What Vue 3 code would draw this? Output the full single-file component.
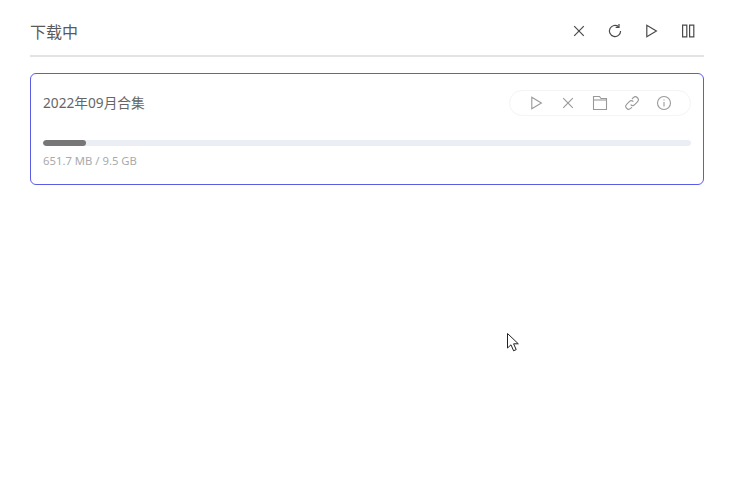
<template>
  <div class="page">
    <header class="head">
      <h1 class="title">下载中</h1>
      <div class="head-actions">
        <button v-for="icon in headIcons" :key="icon" class="head-btn">
          <svg width="16" height="16" viewBox="0 0 16 16" fill="none" stroke="currentColor" stroke-width="1.2">
            <path v-for="d in paths[icon]" :key="d" :d="d" />
          </svg>
        </button>
      </div>
    </header>

    <section class="task">
      <div class="task-top">
        <span class="task-name">2022年09月合集</span>
        <div class="pill">
          <button v-for="icon in taskIcons" :key="icon" class="pill-btn">
            <svg width="16" height="16" viewBox="0 0 16 16" fill="none" stroke="currentColor" stroke-width="1.1">
              <path v-for="d in paths[icon]" :key="d" :d="d" />
            </svg>
          </button>
        </div>
      </div>
      <div class="track">
        <div class="bar" :style="{ width: percent + '%' }"></div>
      </div>
      <div class="size">651.7 MB / 9.5 GB</div>
    </section>

    <svg class="cursor" width="14" height="21" viewBox="0 0 14 21">
      <path d="M1.5 1.5V16L5 12.8L7.6 18.8L10.2 17.6L7.6 11.8H12.3Z" fill="#fff" stroke="#222" stroke-width="1" />
    </svg>
  </div>
</template>

<script setup>
const percent = 6.6

const headIcons = ["close", "refresh", "play", "pause"]
const taskIcons = ["play", "close", "folder", "link", "info"]

const paths = {
  close: ["M3.2 3.2L12.8 12.8", "M12.8 3.2L3.2 12.8"],
  refresh: ["M13.6 8A5.6 5.6 0 1 1 11.6 3.7", "M12 1V4.3H8.7"],
  play: ["M3.8 2.2V13.8L13.4 8Z"],
  pause: ["M3.6 2.2H7.8V13.8H3.6Z", "M10.6 2.2H14.8V13.8H10.6Z"],
  folder: ["M1.5 1.5H7.5L9 3.5H14.5V14.5H1.5Z", "M1.5 5H14.5"],
  link: [
    "M6.6 9.6A2.9 2.9 0 0 0 10.7 9.6L13.4 6.9A2.9 2.9 0 0 0 9.3 2.7L8 4",
    "M9.4 6.6A2.9 2.9 0 0 0 5.3 6.6L2.6 9.3A2.9 2.9 0 0 0 6.7 13.4L8 12.1",
  ],
  info: ["M8 1.5A6.5 6.5 0 1 1 8 14.5A6.5 6.5 0 1 1 8 1.5Z", "M8 7V11.5", "M8 4.4V5.6"],
}
</script>

<style>
html, body {
  margin: 0;
  background: #fff;
}
</style>

<style scoped>
.page {
  position: relative;
  box-sizing: border-box;
  width: 733px;
  height: 479px;
  padding: 8px 29px 0 30px;
  overflow: hidden;
  font-family: "Noto Sans", "Noto Sans CJK SC", sans-serif;
}

.head {
  display: flex;
  align-items: center;
  justify-content: space-between;
  height: 47px;
  border-bottom: 2px solid #e3e3e3;
}

.title {
  margin: -2px 0 0;
  font-size: 16px;
  font-weight: 400;
  color: #5a5a5a;
}

.head-actions {
  display: flex;
  gap: 20px;
  margin-right: 9px;
  margin-top: -1px;
}

.head-btn,
.pill-btn {
  display: flex;
  padding: 0;
  border: 0;
  background: none;
}

.head-btn {
  color: #4a4a4a;
}

.task {
  box-sizing: border-box;
  height: 112px;
  margin-top: 16px;
  padding: 16px 12px 0;
  border: 1px solid #5b5be8;
  border-radius: 6px;
}

.task-top {
  display: flex;
  align-items: center;
  justify-content: space-between;
  height: 26px;
}

.task-name {
  margin-top: -2px;
  font-size: 13.7px;
  color: #666;
}

.pill {
  display: flex;
  align-items: center;
  gap: 16px;
  box-sizing: border-box;
  height: 26px;
  padding: 0 18px;
  border: 1px solid #f4f4f4;
  border-radius: 13px;
}

.pill-btn {
  color: #999;
}

.track {
  height: 6px;
  margin-top: 24px;
  border-radius: 3px;
  background: #ebeef5;
  overflow: hidden;
}

.bar {
  height: 100%;
  border-radius: 3px;
  background: #777;
}

.size {
  margin-top: 6px;
  font-size: 11.3px;
  line-height: 18px;
  color: #aaa;
}

.cursor {
  position: absolute;
  left: 506px;
  top: 332px;
}
</style>
